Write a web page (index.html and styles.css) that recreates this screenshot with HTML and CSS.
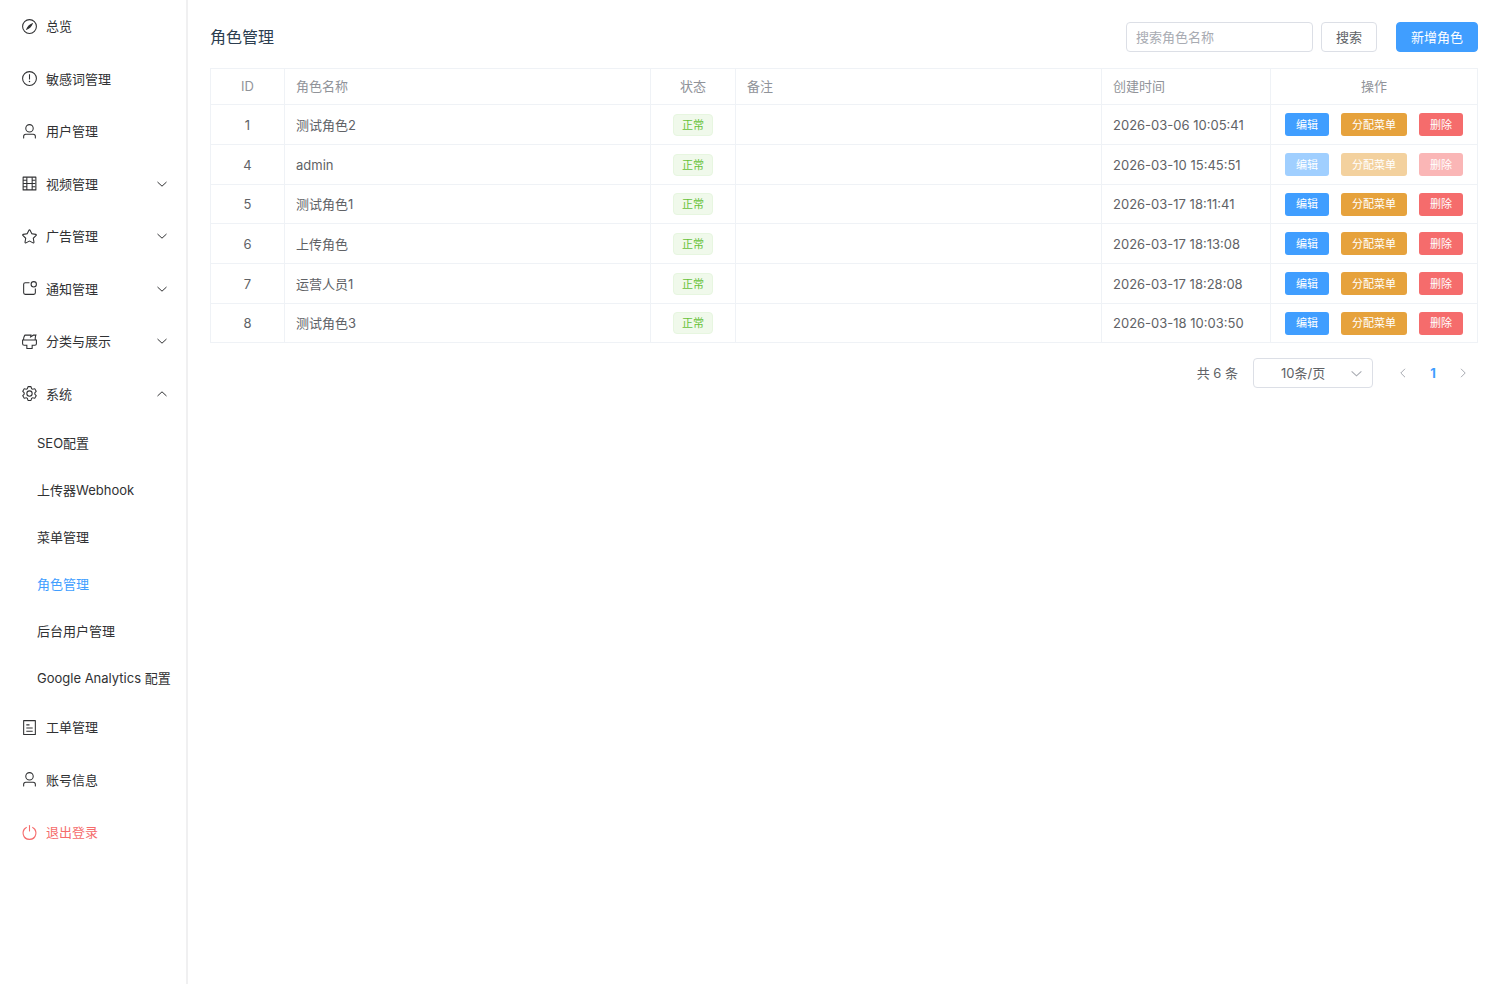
FILE: index.html
```html
<!DOCTYPE html>
<html lang="zh-CN">
<head>
<meta charset="utf-8">
<meta name="viewport" content="width=device-width, initial-scale=1">
<title>角色管理</title>
<link rel="stylesheet" href="styles.css">
</head>
<body>
<svg class="sprite" aria-hidden="true">
  <symbol id="i-user" viewBox="0 0 1024 1024"><path d="M512 512a192 192 0 1 0 0-384 192 192 0 0 0 0 384m0 64a256 256 0 1 1 0-512 256 256 0 0 1 0 512m320 320v-96a96 96 0 0 0-96-96H288a96 96 0 0 0-96 96v96a32 32 0 1 1-64 0v-96a160 160 0 0 1 160-160h448a160 160 0 0 1 160 160v96a32 32 0 1 1-64 0"/></symbol>
  <symbol id="i-down" viewBox="0 0 12 12"><path d="M1.5 4 6 8.2 10.5 4" fill="none" stroke="currentColor"/></symbol>
  <symbol id="i-up" viewBox="0 0 12 12"><path d="M1.5 8 6 3.8 10.5 8" fill="none" stroke="currentColor"/></symbol>
  <symbol id="i-left" viewBox="0 0 12 12"><path d="M8 1.8 3.8 6 8 10.2" fill="none" stroke="currentColor"/></symbol>
  <symbol id="i-right" viewBox="0 0 12 12"><path d="M4 1.8 8.2 6 4 10.2" fill="none" stroke="currentColor"/></symbol>
</svg>
<div class="layout">
  <nav class="sidebar" aria-label="主菜单">
    <ul class="menu">
      <li><a class="item" href="#"><svg class="icon" viewBox="0 0 1024 1024"><path d="M512 896a384 384 0 1 0 0-768 384 384 0 0 0 0 768m0 64a448 448 0 1 1 0-896 448 448 0 0 1 0 896"/><path d="M725.888 315.008C676.48 428.672 624 513.28 568.576 568.64c-55.424 55.424-139.968 107.904-253.568 157.312a12.8 12.8 0 0 1-16.896-16.832c49.536-113.728 102.016-198.272 157.312-253.632 55.36-55.296 139.904-107.776 253.632-157.312a12.8 12.8 0 0 1 16.832 16.832"/></svg><span>总览</span></a></li>
      <li><a class="item" href="#"><svg class="icon" viewBox="0 0 1024 1024"><path d="M512 896a384 384 0 1 0 0-768 384 384 0 0 0 0 768m0 64a448 448 0 1 1 0-896 448 448 0 0 1 0 896M480 256h64v320h-64z"/><circle cx="512" cy="688" r="44"/></svg><span>敏感词管理</span></a></li>
      <li><a class="item" href="#"><svg class="icon"><use href="#i-user"/></svg><span>用户管理</span></a></li>
      <li><button class="item" type="button" aria-expanded="false"><svg class="icon" viewBox="0 0 1024 1024"><path d="M160 160v704h704V160zm-32-64h768a32 32 0 0 1 32 32v768a32 32 0 0 1-32 32H128a32 32 0 0 1-32-32V128a32 32 0 0 1 32-32"/><path d="M320 288V128h64v352h256V128h64v160h160v64H704v128h160v64H704v128h160v64H704v160h-64V544H384v352h-64V736H128v-64h192V544H128v-64h192V352H128v-64z"/></svg><span>视频管理</span><svg class="arrow"><use href="#i-down"/></svg></button></li>
      <li><button class="item" type="button" aria-expanded="false"><svg class="icon" viewBox="0 0 1024 1024"><path d="m512 747.84 228.16 119.936a6.4 6.4 0 0 0 9.28-6.72l-43.52-254.08 184.512-179.904a6.4 6.4 0 0 0-3.52-10.88l-255.104-37.12L517.76 147.904a6.4 6.4 0 0 0-11.52 0L392.192 379.072l-255.104 37.12a6.4 6.4 0 0 0-3.52 10.88L318.08 606.976l-43.584 254.08a6.4 6.4 0 0 0 9.28 6.72zM313.6 924.48a70.4 70.4 0 0 1-102.144-74.24l37.888-220.928L88.96 472.96A70.4 70.4 0 0 1 128 352.896l221.76-32.256 99.2-200.96a70.4 70.4 0 0 1 126.208 0l99.2 200.96 221.824 32.256a70.4 70.4 0 0 1 39.04 120.064L774.72 629.376l37.888 220.928a70.4 70.4 0 0 1-102.144 74.24L512 820.096l-198.4 104.32z"/></svg><span>广告管理</span><svg class="arrow"><use href="#i-down"/></svg></button></li>
      <li><button class="item" type="button" aria-expanded="false"><svg class="icon" viewBox="0 0 1024 1024"><path d="M512 128v64H256a64 64 0 0 0-64 64v512a64 64 0 0 0 64 64h512a64 64 0 0 0 64-64V512h64v256a128 128 0 0 1-128 128H256a128 128 0 0 1-128-128V256a128 128 0 0 1 128-128z"/><path d="M768 384a128 128 0 1 0 0-256 128 128 0 0 0 0 256m0 64a192 192 0 1 1 0-384 192 192 0 0 1 0 384"/></svg><span>通知管理</span><svg class="arrow"><use href="#i-down"/></svg></button></li>
      <li><button class="item" type="button" aria-expanded="false"><svg class="icon" viewBox="0 0 1024 1024"><path d="M896 448H128v192a64 64 0 0 0 64 64h192v192h256V704h192a64 64 0 0 0 64-64zm-770.752-64c0-47.552 5.248-90.24 15.552-128 14.72-54.016 42.496-107.392 83.2-160h417.28l-15.36 70.336L736 96h211.2c-24.832 42.88-41.92 96.256-51.2 160a663.872 663.872 0 0 0-6.144 128H960v256a128 128 0 0 1-128 128H704v160a32 32 0 0 1-32 32H352a32 32 0 0 1-32-32V768H192A128 128 0 0 1 64 640V384h61.248zm64 0h636.544c-2.048-45.824.256-91.584 6.848-137.216 4.48-30.848 10.688-59.776 18.688-86.784h-96.64l-221.12 141.248L561.92 160H256.512c-25.856 37.888-43.776 75.456-53.952 112.832-8.768 32.064-13.248 69.12-13.312 111.168z"/></svg><span>分类与展示</span><svg class="arrow"><use href="#i-down"/></svg></button></li>
      <li><button class="item" type="button" aria-expanded="true"><svg class="icon" viewBox="0 0 1024 1024"><path d="M600.704 64a32 32 0 0 1 30.464 22.208l35.2 109.376c14.784 7.232 28.928 15.36 42.432 24.512l112.384-24.192a32 32 0 0 1 34.432 15.36L944.32 364.8a32 32 0 0 1-4.032 37.504l-77.12 85.12a357.12 357.12 0 0 1 0 49.024l77.12 85.248a32 32 0 0 1 4.032 37.504l-88.704 153.6a32 32 0 0 1-34.432 15.296L708.8 803.904c-13.44 9.088-27.648 17.28-42.368 24.512l-35.264 109.376A32 32 0 0 1 600.704 960H423.296a32 32 0 0 1-30.464-22.208L357.696 828.48a351.616 351.616 0 0 1-42.56-24.64l-112.32 24.256a32 32 0 0 1-34.432-15.36L79.68 659.2a32 32 0 0 1 4.032-37.504l77.12-85.248a357.12 357.12 0 0 1 0-48.896l-77.12-85.248A32 32 0 0 1 79.68 364.8l88.704-153.6a32 32 0 0 1 34.432-15.296l112.32 24.256c13.568-9.152 27.776-17.408 42.56-24.64l35.2-109.312A32 32 0 0 1 423.232 64H600.64zm-23.424 64H446.72l-36.352 113.088-24.512 11.968a294.113 294.113 0 0 0-34.816 20.096l-22.656 15.36-116.224-25.088-65.28 113.152 79.68 88.192-1.92 27.136a293.12 293.12 0 0 0 0 40.192l1.92 27.136-79.808 88.192 65.344 113.152 116.224-25.024 22.656 15.296a294.113 294.113 0 0 0 34.816 20.096l24.512 11.968L446.72 896h130.688l36.48-113.152 24.448-11.904a288.282 288.282 0 0 0 34.752-20.096l22.592-15.296 116.288 25.024 65.28-113.152-79.744-88.192 1.92-27.136a293.12 293.12 0 0 0 0-40.256l-1.92-27.136 79.808-88.128-65.344-113.152-116.288 24.96-22.592-15.232a287.616 287.616 0 0 0-34.752-20.096l-24.448-11.904L577.344 128zM512 320a192 192 0 1 1 0 384 192 192 0 0 1 0-384m0 64a128 128 0 1 0 0 256 128 128 0 0 0 0-256"/></svg><span>系统</span><svg class="arrow"><use href="#i-up"/></svg></button>
        <ul class="submenu">
          <li><a class="subitem" href="#">SEO配置</a></li>
          <li><a class="subitem" href="#">上传器Webhook</a></li>
          <li><a class="subitem" href="#">菜单管理</a></li>
          <li><a class="subitem active" href="#" aria-current="page">角色管理</a></li>
          <li><a class="subitem" href="#">后台用户管理</a></li>
          <li><a class="subitem" href="#">Google Analytics 配置</a></li>
        </ul>
      </li>
      <li><a class="item" href="#"><svg class="icon" viewBox="0 0 1024 1024"><path d="M192 128v768h640V128zm-32-64h704a32 32 0 0 1 32 32v832a32 32 0 0 1-32 32H160a32 32 0 0 1-32-32V96a32 32 0 0 1 32-32m160 448h384v64H320zm0-192h192v64H320zm0 384h384v64H320z"/></svg><span>工单管理</span></a></li>
      <li><a class="item" href="#"><svg class="icon"><use href="#i-user"/></svg><span>账号信息</span></a></li>
      <li><a class="item logout" href="#"><svg class="icon" viewBox="0 0 1024 1024"><path d="M352 159.872V230.4a352 352 0 1 0 320 0v-70.592A416.128 416.128 0 0 1 512 960a416 416 0 0 1-160-800.128z"/><path d="M512 64q32 0 32 32v320q0 32-32 32t-32-32V96q0-32 32-32"/></svg><span>退出登录</span></a></li>
    </ul>
  </nav>
  <main class="main">
    <header class="toolbar">
      <h1 class="title">角色管理</h1>
      <form class="search">
        <input class="search-input" type="text" placeholder="搜索角色名称" aria-label="搜索角色名称">
        <button class="btn" type="button">搜索</button>
      </form>
      <button class="btn btn-primary" type="button">新增角色</button>
    </header>
    <table class="table">
      <colgroup><col class="col-id"><col><col class="col-status"><col><col class="col-time"><col class="col-actions"></colgroup>
      <thead>
        <tr><th class="center">ID</th><th>角色名称</th><th class="center">状态</th><th>备注</th><th>创建时间</th><th class="center">操作</th></tr>
      </thead>
      <tbody>
        <tr><td class="center">1</td><td>测试角色2</td><td class="center"><span class="tag">正常</span></td><td></td><td>2026-03-06 10:05:41</td><td><div class="actions"><button class="mini edit" type="button">编辑</button><button class="mini assign" type="button">分配菜单</button><button class="mini remove" type="button">删除</button></div></td></tr>
        <tr><td class="center">4</td><td>admin</td><td class="center"><span class="tag">正常</span></td><td></td><td>2026-03-10 15:45:51</td><td><div class="actions"><button class="mini edit" type="button" disabled>编辑</button><button class="mini assign" type="button" disabled>分配菜单</button><button class="mini remove" type="button" disabled>删除</button></div></td></tr>
        <tr><td class="center">5</td><td>测试角色1</td><td class="center"><span class="tag">正常</span></td><td></td><td>2026-03-17 18:11:41</td><td><div class="actions"><button class="mini edit" type="button">编辑</button><button class="mini assign" type="button">分配菜单</button><button class="mini remove" type="button">删除</button></div></td></tr>
        <tr><td class="center">6</td><td>上传角色</td><td class="center"><span class="tag">正常</span></td><td></td><td>2026-03-17 18:13:08</td><td><div class="actions"><button class="mini edit" type="button">编辑</button><button class="mini assign" type="button">分配菜单</button><button class="mini remove" type="button">删除</button></div></td></tr>
        <tr><td class="center">7</td><td>运营人员1</td><td class="center"><span class="tag">正常</span></td><td></td><td>2026-03-17 18:28:08</td><td><div class="actions"><button class="mini edit" type="button">编辑</button><button class="mini assign" type="button">分配菜单</button><button class="mini remove" type="button">删除</button></div></td></tr>
        <tr><td class="center">8</td><td>测试角色3</td><td class="center"><span class="tag">正常</span></td><td></td><td>2026-03-18 10:03:50</td><td><div class="actions"><button class="mini edit" type="button">编辑</button><button class="mini assign" type="button">分配菜单</button><button class="mini remove" type="button">删除</button></div></td></tr>
      </tbody>
    </table>
    <div class="pagination">
      <span>共 6 条</span>
      <div class="select">
        <select class="page-size" aria-label="每页条数"><option>10条/页</option><option>20条/页</option></select>
        <svg class="select-arrow"><use href="#i-down"/></svg>
      </div>
      <div class="pager">
        <button class="page" type="button" aria-label="上一页" disabled><svg class="page-arrow"><use href="#i-left"/></svg></button>
        <button class="page current" type="button" aria-current="page">1</button>
        <button class="page" type="button" aria-label="下一页" disabled><svg class="page-arrow"><use href="#i-right"/></svg></button>
      </div>
    </div>
  </main>
</div>
</body>
</html>
```
FILE: styles.css
```css
* { box-sizing: border-box; }
body {
  margin: 0;
  font: 13px/20px Inter, "Noto Sans CJK SC", sans-serif;
  color: #606266;
  background: #fff;
}
button, input, select { font: inherit; color: inherit; }
button { cursor: pointer; }
ul { margin: 0; padding: 0; list-style: none; }
a { color: inherit; text-decoration: none; }
.sprite { display: none; }
.layout { display: flex; min-height: 100vh; }

.sidebar {
  flex: none;
  width: 188px;
  border-right: 2px solid #f0f0f1;
  color: #303133;
}
.item {
  display: flex;
  align-items: center;
  gap: 8px;
  width: 100%;
  height: 52px;
  padding: 0 18px 0 21px;
  border: 0;
  background: none;
  text-align: left;
}
.menu > li:nth-child(even) > .item { height: 53px; }
.icon { width: 17px; height: 17px; fill: currentColor; }
.arrow { width: 12px; height: 12px; margin-left: auto; }
.subitem {
  display: block;
  padding-left: 37px;
  line-height: 47px;
  white-space: nowrap;
}
.submenu > li:last-child > .subitem { line-height: 46px; }
.active { color: #409eff; }
.logout { color: #f56c6c; }

.main { flex: 1; min-width: 0; padding: 22px; }
.toolbar { display: flex; align-items: center; height: 30px; margin-bottom: 16px; }
.title {
  flex: 1;
  margin: 0;
  font-size: 16px;
  font-weight: 400;
  color: #2c3e50;
}
.search { display: flex; gap: 8px; margin-right: 19px; }
.search-input {
  width: 187px;
  height: 30px;
  padding: 0 9px;
  border: 1px solid #dcdfe6;
  border-radius: 4px;
  outline: 0;
}
.search-input::placeholder { color: #a8abb2; }
.btn {
  height: 30px;
  padding: 0 14px;
  border: 1px solid #dcdfe6;
  border-radius: 4px;
  background: #fff;
}
.btn-primary { border-color: #409eff; background: #409eff; color: #fff; }

.table {
  width: 100%;
  table-layout: fixed;
  border-collapse: separate;
  border-spacing: 0;
  border-top: 1px solid #eff2f6;
  border-left: 1px solid #eff2f6;
}
.col-id { width: 74px; }
.col-status { width: 85px; }
.col-time { width: 169px; }
.col-actions { width: 207px; }
th, td {
  height: 40px;
  padding: 0 11px;
  border-right: 1px solid #eff2f6;
  border-bottom: 1px solid #eff2f6;
  text-align: left;
}
th { height: 36px; padding-bottom: 2px; font-weight: 400; color: #909399; }
tr:nth-child(3n) td { height: 39px; }
.table .center { text-align: center; }
.tag {
  display: inline-block;
  padding: 0 8px;
  border: 1px solid #e7f6e0;
  border-radius: 4px;
  background: #f0f9eb;
  color: #67c23a;
  font-size: 11px;
  vertical-align: middle;
}
.actions { display: flex; justify-content: center; gap: 12px; }
.mini {
  height: 23px;
  padding: 0 11px;
  border: 0;
  border-radius: 3px;
  color: #fff;
  font-size: 11px;
  white-space: nowrap;
}
.edit { background: #409eff; }
.assign { background: #e6a23c; }
.remove { background: #f56c6c; }
.edit:disabled { background: #a0cfff; }
.assign:disabled { background: #f3d19e; }
.remove:disabled { background: #fab6b6; }

.pagination { display: flex; align-items: center; justify-content: flex-end; gap: 15px; margin-top: 15px; }
.select { display: grid; align-items: center; width: 120px; }
.page-size {
  grid-area: 1 / 1;
  height: 30px;
  padding: 0 23px 0 27px;
  border: 1px solid #dcdfe6;
  border-radius: 4px;
  background: #fff;
  appearance: none;
}
.select-arrow {
  grid-area: 1 / 1;
  justify-self: end;
  width: 13px;
  height: 13px;
  margin-right: 10px;
  color: #a8abb2;
  pointer-events: none;
}
.pager { display: flex; }
.page {
  display: grid;
  place-items: center;
  width: 30px;
  height: 30px;
  padding: 0;
  border: 0;
  background: none;
}
.page:disabled { color: #a8abb2; }
.page-arrow { width: 12px; height: 12px; }
.current { color: #409eff; font-weight: 700; }
```
